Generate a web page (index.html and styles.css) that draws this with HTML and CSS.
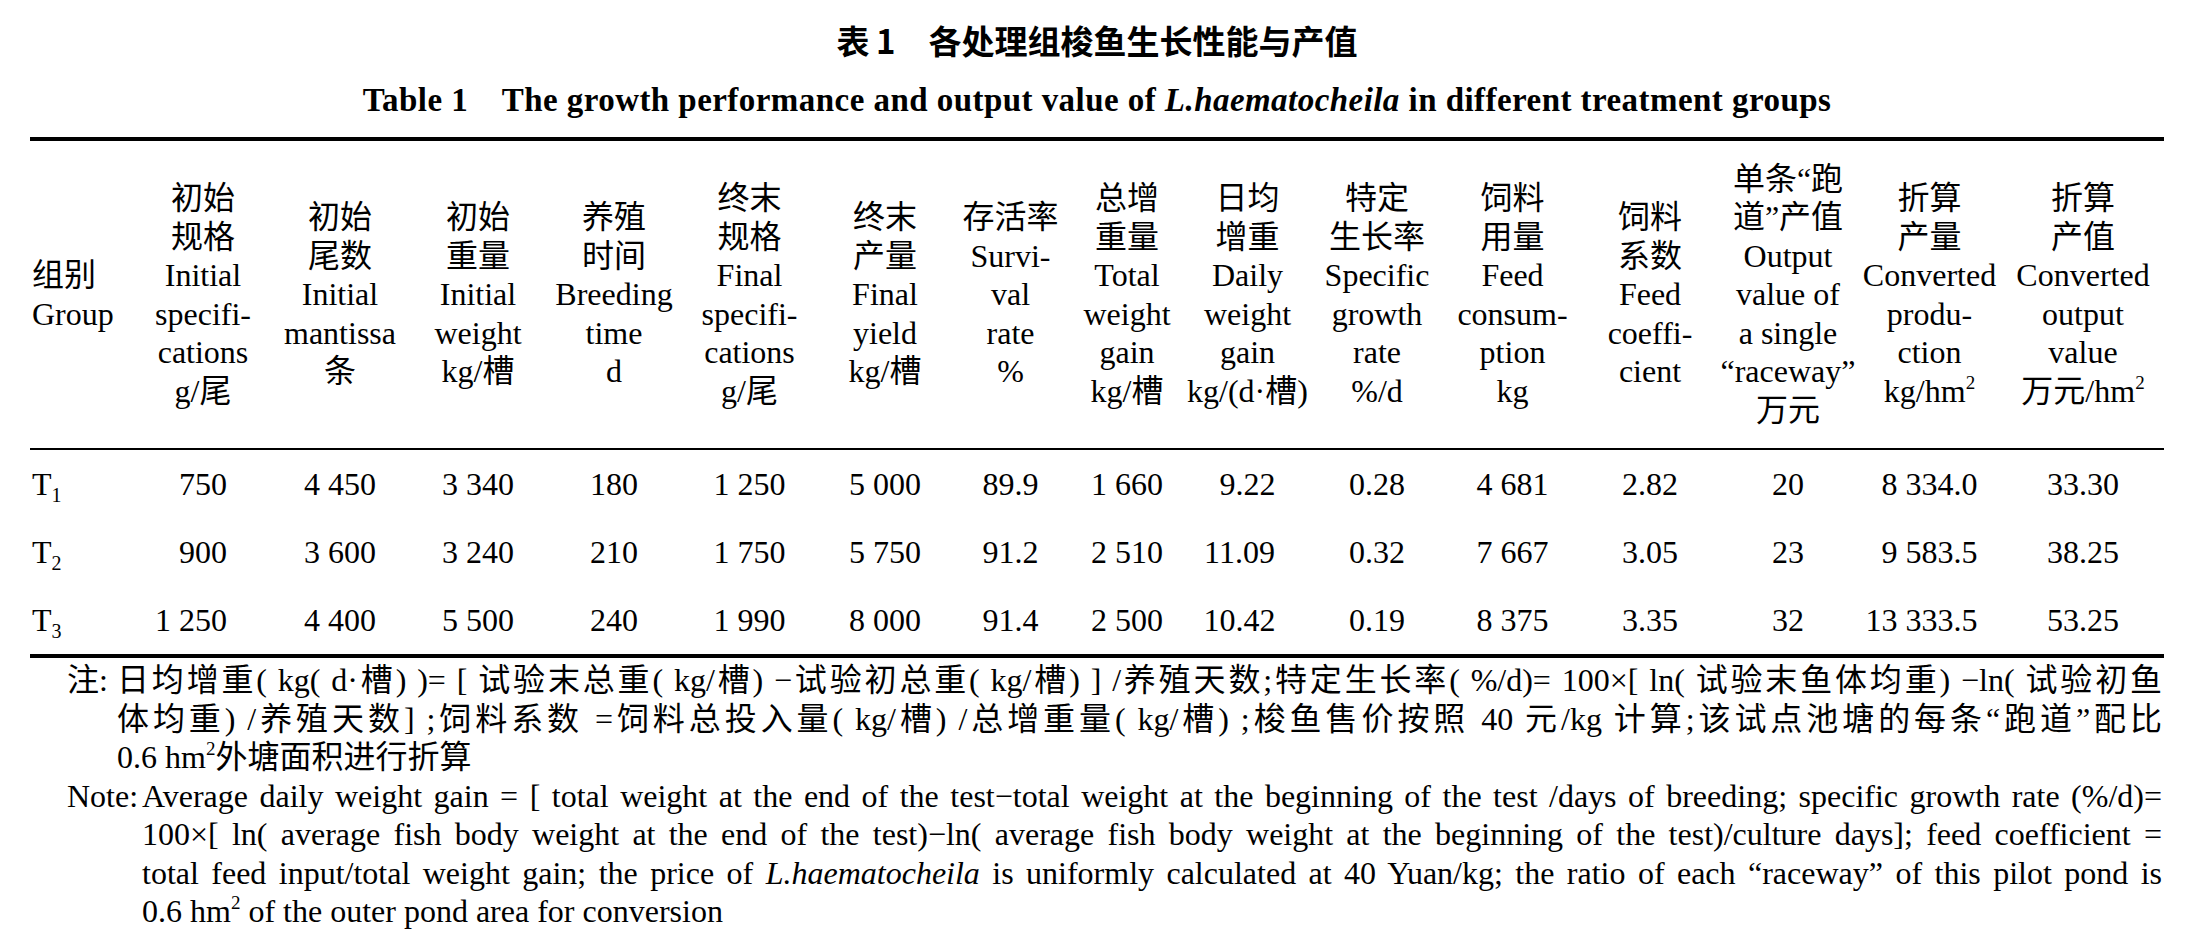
FILE: index.html
```html
<!DOCTYPE html>
<html lang="zh">
<head>
<meta charset="utf-8">
<title>表1 各处理组梭鱼生长性能与产值</title>
<link rel="stylesheet" href="styles.css">
</head>
<body>
<div class="page">
  <div class="title-cn">表&#8201;1&#12288;各处理组梭鱼生长性能与产值</div>
  <div class="title-en">Table 1&emsp;The growth performance and output value of <i>L.haematocheila</i> in different treatment groups</div>

  <div class="tbl">
    <div class="h first"><div class="hl">组别<br>Group</div></div>
    <div class="h"><div class="hl">初始<br>规格<br>Initial<br>specifi-<br>cations<br>g/尾</div></div>
    <div class="h"><div class="hl">初始<br>尾数<br>Initial<br>mantissa<br>条</div></div>
    <div class="h"><div class="hl">初始<br>重量<br>Initial<br>weight<br>kg/槽</div></div>
    <div class="h"><div class="hl">养殖<br>时间<br>Breeding<br>time<br>d</div></div>
    <div class="h"><div class="hl">终末<br>规格<br>Final<br>specifi-<br>cations<br>g/尾</div></div>
    <div class="h"><div class="hl">终末<br>产量<br>Final<br>yield<br>kg/槽</div></div>
    <div class="h"><div class="hl">存活率<br>Survi-<br>val<br>rate<br>%</div></div>
    <div class="h"><div class="hl">总增<br>重量<br>Total<br>weight<br>gain<br>kg/槽</div></div>
    <div class="h"><div class="hl">日均<br>增重<br>Daily<br>weight<br>gain<br>kg/(d·槽)</div></div>
    <div class="h"><div class="hl">特定<br>生长率<br>Specific<br>growth<br>rate<br>%/d</div></div>
    <div class="h"><div class="hl">饲料<br>用量<br>Feed<br>consum-<br>ption<br>kg</div></div>
    <div class="h"><div class="hl">饲料<br>系数<br>Feed<br>coeffi-<br>cient</div></div>
    <div class="h"><div class="hl">单条“跑<br>道”产值<br>Output<br>value of<br>a single<br>“raceway”<br>万元</div></div>
    <div class="h"><div class="hl">折算<br>产量<br>Converted<br>produ-<br>ction<br>kg/hm<sup>2</sup></div></div>
    <div class="h"><div class="hl">折算<br>产值<br>Converted<br>output<br>value<br>万元/hm<sup>2</sup></div></div>

    <div class="c first">T<sub>1</sub></div>
    <div class="c">750</div>
    <div class="c">4 450</div>
    <div class="c">3 340</div>
    <div class="c">180</div>
    <div class="c">1 250</div>
    <div class="c">5 000</div>
    <div class="c">89.9</div>
    <div class="c">1 660</div>
    <div class="c">9.22</div>
    <div class="c">0.28</div>
    <div class="c">4 681</div>
    <div class="c">2.82</div>
    <div class="c">20</div>
    <div class="c">8 334.0</div>
    <div class="c">33.30</div>

    <div class="c first">T<sub>2</sub></div>
    <div class="c">900</div>
    <div class="c">3 600</div>
    <div class="c">3 240</div>
    <div class="c">210</div>
    <div class="c">1 750</div>
    <div class="c">5 750</div>
    <div class="c">91.2</div>
    <div class="c">2 510</div>
    <div class="c"><span class="p1">1</span>1.09</div>
    <div class="c">0.32</div>
    <div class="c">7 667</div>
    <div class="c">3.05</div>
    <div class="c">23</div>
    <div class="c">9 583.5</div>
    <div class="c">38.25</div>

    <div class="c first">T<sub>3</sub></div>
    <div class="c"><span class="p2">1 </span>250</div>
    <div class="c">4 400</div>
    <div class="c">5 500</div>
    <div class="c">240</div>
    <div class="c">1 990</div>
    <div class="c">8 000</div>
    <div class="c">91.4</div>
    <div class="c">2 500</div>
    <div class="c"><span class="p1">1</span>0.42</div>
    <div class="c">0.19</div>
    <div class="c">8 375</div>
    <div class="c">3.35</div>
    <div class="c">32</div>
    <div class="c"><span class="p1">1</span>3 333.5</div>
    <div class="c">53.25</div>
  </div>

  <div class="notes">
    <div class="note cn">
      <div class="lab">注:</div>
      <div class="txt">
        <div class="ln">日均增重( kg( d·槽) )= [ 试验末总重( kg/槽) −试验初总重( kg/槽) ] /养殖天数;特定生长率( %/d)= 100×[ ln( 试验末鱼体均重) −ln( 试验初鱼</div>
        <div class="ln">体均重) /养殖天数] ;饲料系数 =饲料总投入量( kg/槽) /总增重量( kg/槽) ;梭鱼售价按照 40 元/kg 计算;该试点池塘的每条“跑道”配比</div>
        <div class="ln last">0.6 hm<sup>2</sup>外塘面积进行折算</div>
      </div>
    </div>
    <div class="note en">
      <div class="lab">Note:</div>
      <div class="txt">
        <div class="ln">Average daily weight gain = [ total weight at the end of the test−total weight at the beginning of the test /days of breeding; specific growth rate (%/d)=</div>
        <div class="ln">100×[ ln( average fish body weight at the end of the test)−ln( average fish body weight at the beginning of the test)/culture days]; feed coefficient =</div>
        <div class="ln">total feed input/total weight gain; the price of <i>L.haematocheila</i> is uniformly calculated at 40 Yuan/kg; the ratio of each “raceway” of this pilot pond is</div>
        <div class="ln last">0.6 hm<sup>2</sup> of the outer pond area for conversion</div>
      </div>
    </div>
  </div>
</div>
</body>
</html>
```

FILE: styles.css
```css
* {
  box-sizing: border-box;
}

body {
  margin: 0;
  background: #ffffff;
  color: #000000;
  font-family: "Liberation Serif", "Noto Sans CJK SC", serif;
}

.page {
  width: 2134px;
  margin-left: 30px;
  padding-top: 20px;
}

.title-cn {
  font-family: "Noto Sans CJK SC", sans-serif;
  font-weight: 700;
  font-size: 33px;
  line-height: 40px;
  text-align: center;
}

.title-en {
  margin-top: 20px;
  font-weight: 700;
  font-size: 33px;
  letter-spacing: 0.45px;
  line-height: 40px;
  text-align: center;
  white-space: nowrap;
}

.tbl {
  margin-top: 17px;
  display: grid;
  grid-template-columns: 105px 136px 138px 138px 134px 137px 134px 117px 116px 125px 134px 137px 138px 138px 145px 162px;
  border-top: 4px solid #000;
  border-bottom: 4px solid #000;
  font-size: 32px;
}

.h {
  height: 309px;
  border-bottom: 2px solid #000;
  display: flex;
  flex-direction: column;
  justify-content: center;
  align-items: center;
}

.hl {
  text-align: center;
  line-height: 38.5px;
  white-space: nowrap;
}

.h.first {
  align-items: flex-start;
  padding-left: 2px;
}

.h.first .hl {
  text-align: left;
}

.c {
  height: 68px;
  line-height: 68px;
  text-align: center;
  white-space: nowrap;
}

.c.first {
  text-align: left;
  padding-left: 2px;
}

.p1 {
  margin-left: -0.5em;
}

.p2 {
  margin-left: -0.75em;
}

sub {
  font-size: 20px;
  line-height: 0;
  vertical-align: -7px;
}

sup {
  font-size: 19px;
  line-height: 0;
  vertical-align: 13px;
}

.notes {
  padding-top: 3px;
  padding-left: 37px;
  padding-right: 2px;
  font-size: 32px;
  line-height: 38.5px;
}

.note {
  display: flex;
}

.lab {
  flex: none;
  width: 50px;
  white-space: nowrap;
}

.note.en .lab {
  width: 75px;
}

.txt {
  flex: 1;
  min-width: 0;
}

.ln {
  text-align: justify;
  text-align-last: justify;
}

.note.cn .ln {
  text-justify: inter-word;
}

.ln.last {
  text-align-last: left;
}
```
